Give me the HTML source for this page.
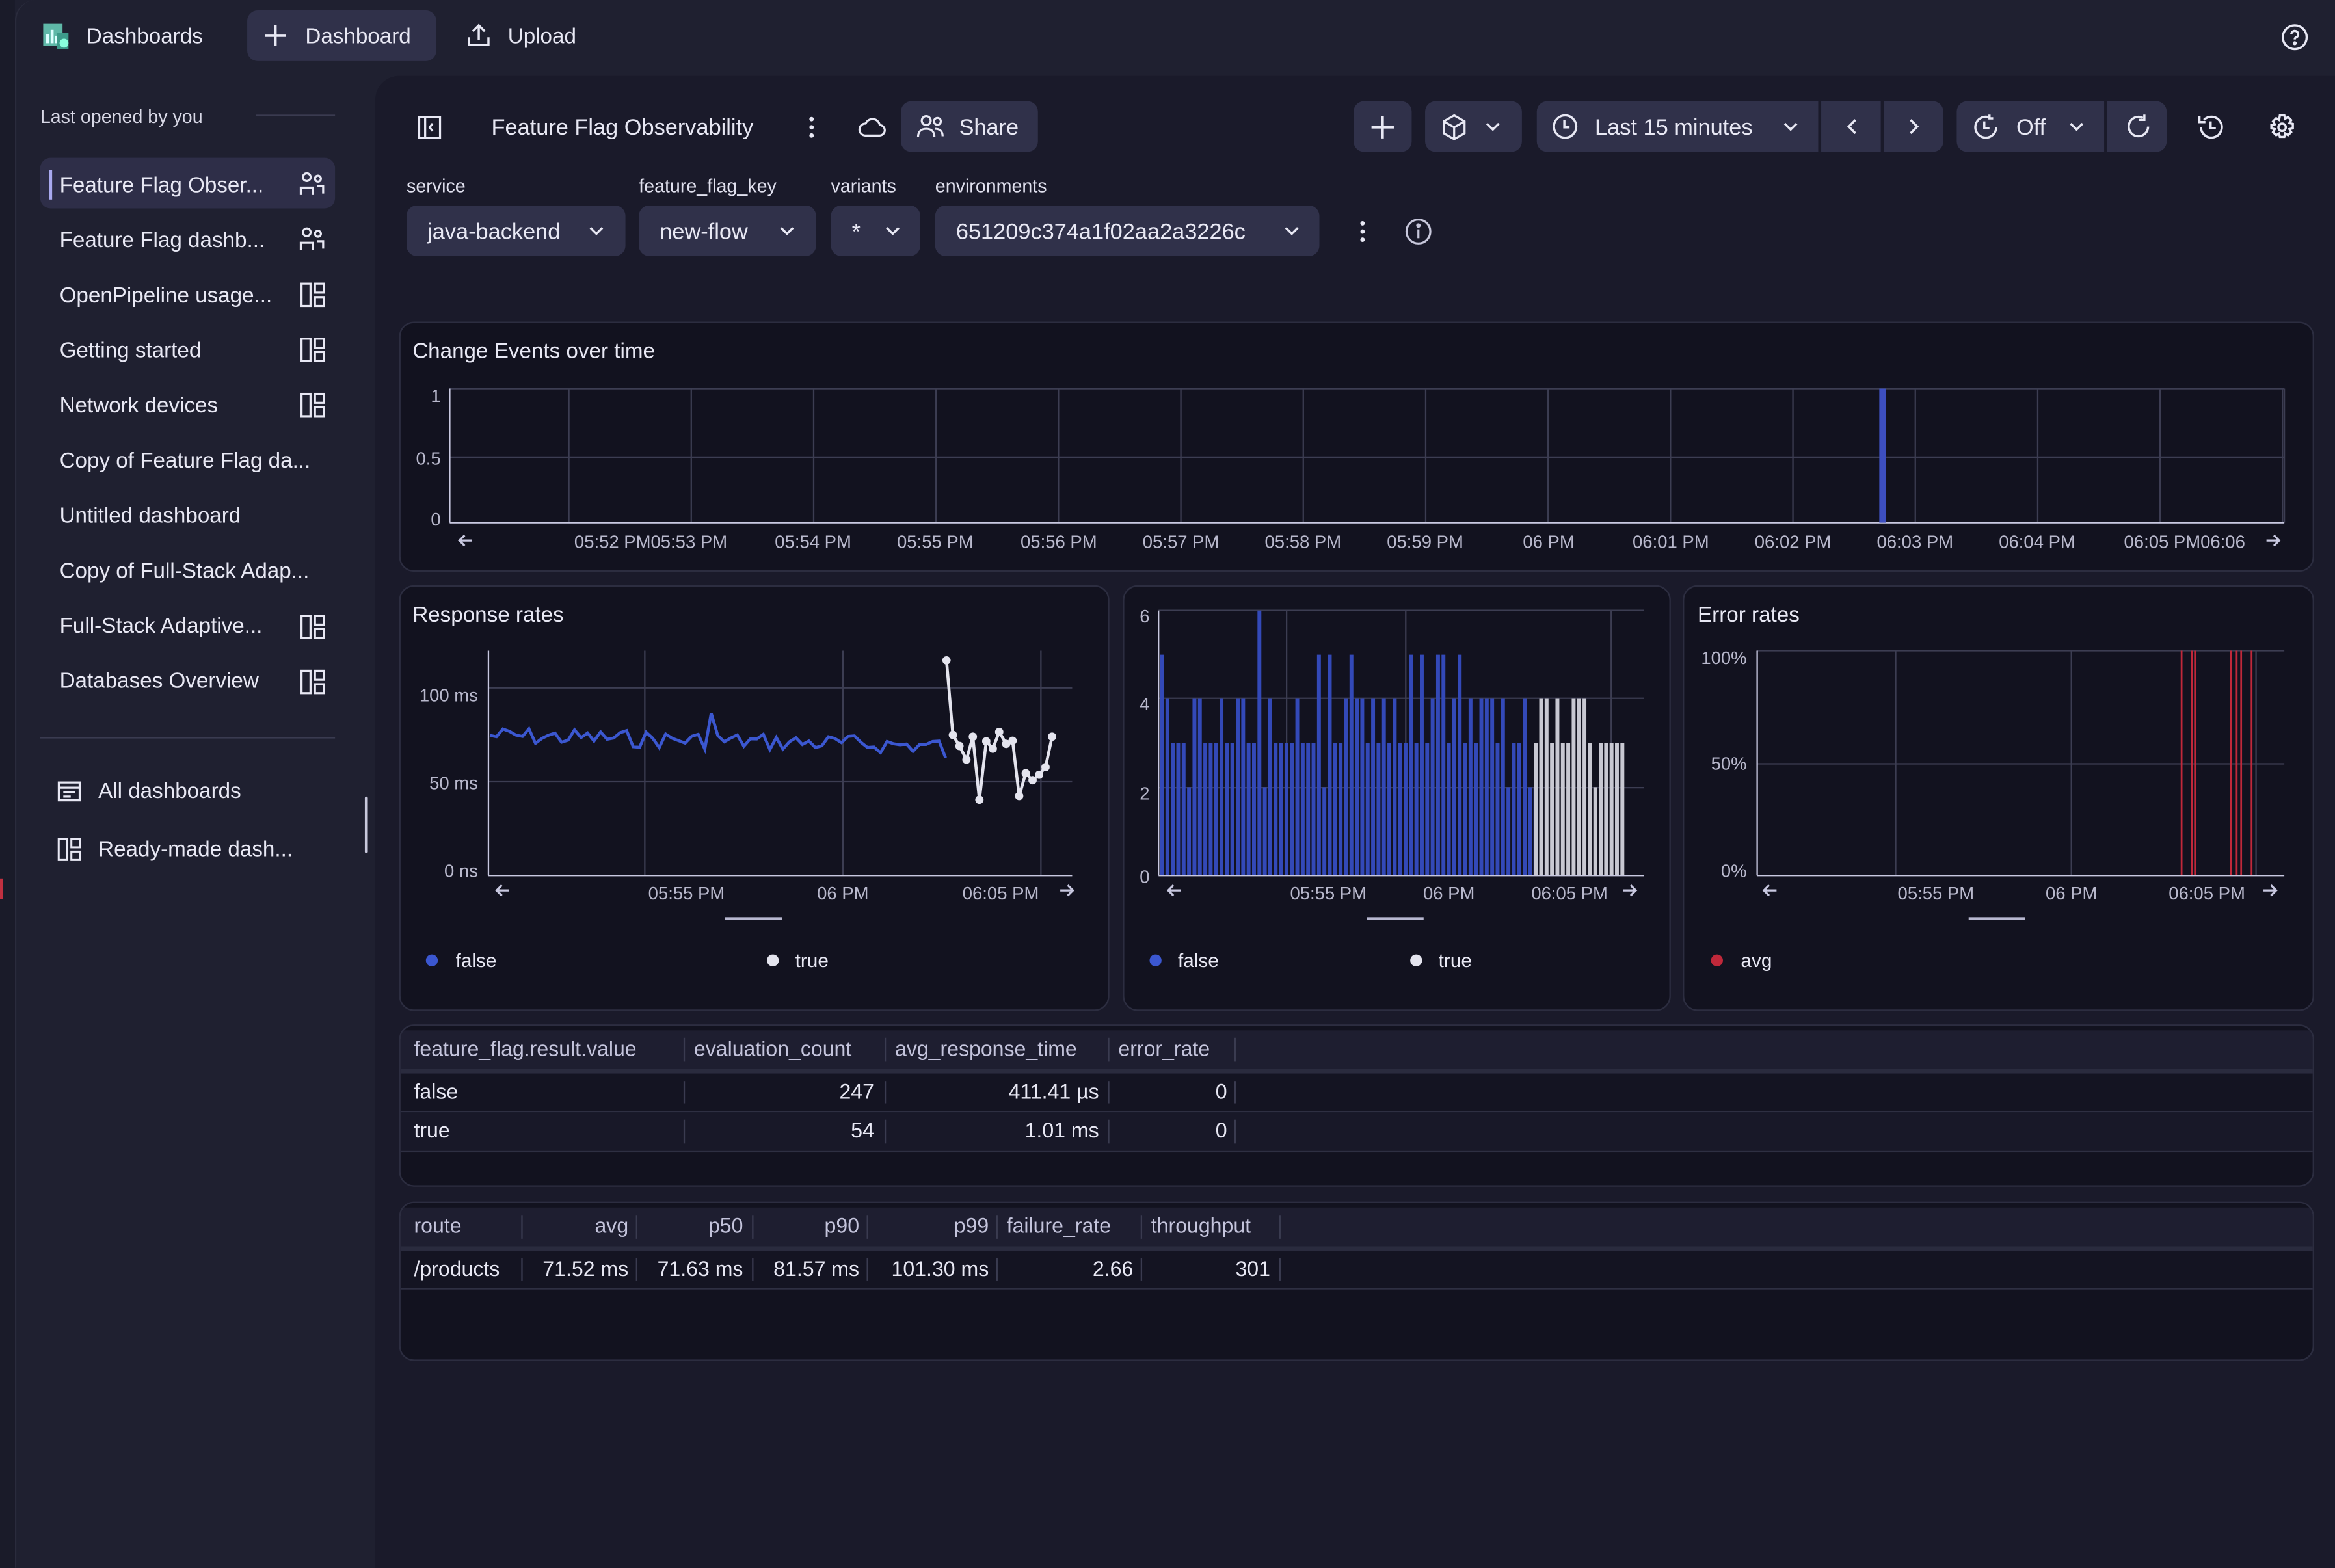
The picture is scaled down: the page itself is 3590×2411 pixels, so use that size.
<!DOCTYPE html>
<html><head><meta charset="utf-8">
<style>
html,body{margin:0;padding:0;width:3590px;height:2410px;overflow:hidden;background:#1f2030;}
#w{position:absolute;left:0;top:0;width:1568px;height:1053px;transform:scale(2.2895);transform-origin:0 0;font-family:"Liberation Sans",sans-serif;color:#e8e8f4;background:#1f2030;}
.a{position:absolute;white-space:nowrap;}
.t{font-size:14.5px;transform:translateY(2px);}
.m{transform:translateY(1.5px);}
.btn{position:absolute;background:#30314a;border-radius:7px;}
.tile{position:absolute;background:#12121f;border:1px solid #2c2d40;border-radius:10px;overflow:hidden;}
.lbl{font-size:12.5px;color:#e0e0ee;transform:translateY(1px);}
.ax{font-size:12px;fill:#b8b8cc;font-family:"Liberation Sans",sans-serif;}
svg{position:absolute;overflow:visible;}
.row{position:absolute;left:0;right:0;}
.cell{position:absolute;top:0;height:100%;font-size:14px;line-height:26px;transform:translateY(-1px);}
.sep{position:absolute;top:5px;bottom:5px;width:1px;background:#3a3b50;}
</style></head><body><div id="w">
<div class="a" style="left:0;top:0;width:10px;height:1053px;background:#1a1b29;"></div>
<div class="a" style="left:10px;top:0;width:1558px;height:1053px;background:#1f2030;border-top-left-radius:14px;border-left:1px solid #2a2b3c;"></div>
<svg style="left:28px;top:14px" width="20" height="20" viewBox="0 0 20 20"><rect x="1" y="2" width="13" height="15" fill="#5fb8a8"/><rect x="3" y="9" width="2" height="6" fill="#dff"/><rect x="6" y="6" width="2" height="9" fill="#dff"/><rect x="9" y="10" width="2" height="5" fill="#dff"/><rect x="10" y="8" width="8" height="11" fill="#3d9a8a"/><circle cx="15" cy="15" r="3" fill="#8fd"/></svg>
<div class="a t" style="left:58px;top:15px">Dashboards</div>
<div class="btn" style="left:166px;top:7px;width:127px;height:34px;"></div>
<svg style="left:177px;top:16px" width="16" height="16" viewBox="0 0 16 16"><path d="M8 1v14M1 8h14" stroke="#e8e8f4" stroke-width="1.6"/></svg>
<div class="a t" style="left:205px;top:15px">Dashboard</div>
<svg style="left:313px;top:15px" width="17" height="17" viewBox="0 0 17 17" fill="none" stroke="#e8e8f4" stroke-width="1.5"><path d="M8.5 12V2M4.5 6l4-4 4 4M2 10v5h13v-5"/></svg>
<div class="a t" style="left:341px;top:15px">Upload</div>
<svg style="left:1532px;top:16px" width="18" height="18" viewBox="0 0 18 18" fill="none" stroke="#e8e8f4" stroke-width="1.5"><circle cx="9" cy="9" r="8"/><path d="M6.7 7a2.3 2.3 0 1 1 3 2.2c-.6.3-.7.7-.7 1.3"/><circle cx="9" cy="13" r=".6" fill="#e8e8f4"/></svg>

<div class="a m" style="left:27px;top:70px;font-size:12.5px;color:#d8d8e6">Last opened by you</div>
<div class="a" style="left:172px;top:77px;width:53px;height:1px;background:#3a3b50"></div>
<div class="btn" style="left:27px;top:106px;width:198px;height:34px;background:#2e2e48"></div>
<div class="a" style="left:33px;top:114px;width:2px;height:20px;background:#a9a9f0"></div>
<div class="a t" style="left:40px;top:115px">Feature Flag Obser...</div>
<div class="a t" style="left:40px;top:152px">Feature Flag dashb...</div>
<div class="a t" style="left:40px;top:189px">OpenPipeline usage...</div>
<div class="a t" style="left:40px;top:226px">Getting started</div>
<div class="a t" style="left:40px;top:263px">Network devices</div>
<div class="a t" style="left:40px;top:300px">Copy of Feature Flag da...</div>
<div class="a t" style="left:40px;top:337px">Untitled dashboard</div>
<div class="a t" style="left:40px;top:374px">Copy of Full-Stack Adap...</div>
<div class="a t" style="left:40px;top:411px">Full-Stack Adaptive...</div>
<div class="a t" style="left:40px;top:448px">Databases Overview</div>
<svg style="left:200px;top:114px" width="19" height="19" viewBox="0 0 19 19" fill="none" stroke="#e8e8f4" stroke-width="1.4"><circle cx="6" cy="5" r="2.6"/><circle cx="13.5" cy="6" r="2"/><path d="M2 17v-5h8v5M13 11h4v5"/></svg>
<svg style="left:200px;top:151px" width="19" height="19" viewBox="0 0 19 19" fill="none" stroke="#e8e8f4" stroke-width="1.4"><circle cx="6" cy="5" r="2.6"/><circle cx="13.5" cy="6" r="2"/><path d="M2 17v-5h8v5M13 11h4v5"/></svg>
<svg style="left:201px;top:189px" width="18" height="18" viewBox="0 0 18 18" fill="none" stroke="#e8e8f4" stroke-width="1.4"><rect x="1.5" y="1.5" width="6" height="15"/><rect x="10.5" y="1.5" width="6" height="6"/><rect x="10.5" y="10.5" width="6" height="6"/></svg>
<svg style="left:201px;top:226px" width="18" height="18" viewBox="0 0 18 18" fill="none" stroke="#e8e8f4" stroke-width="1.4"><rect x="1.5" y="1.5" width="6" height="15"/><rect x="10.5" y="1.5" width="6" height="6"/><rect x="10.5" y="10.5" width="6" height="6"/></svg>
<svg style="left:201px;top:263px" width="18" height="18" viewBox="0 0 18 18" fill="none" stroke="#e8e8f4" stroke-width="1.4"><rect x="1.5" y="1.5" width="6" height="15"/><rect x="10.5" y="1.5" width="6" height="6"/><rect x="10.5" y="10.5" width="6" height="6"/></svg>
<svg style="left:201px;top:412px" width="18" height="18" viewBox="0 0 18 18" fill="none" stroke="#e8e8f4" stroke-width="1.4"><rect x="1.5" y="1.5" width="6" height="15"/><rect x="10.5" y="1.5" width="6" height="6"/><rect x="10.5" y="10.5" width="6" height="6"/></svg>
<svg style="left:201px;top:449px" width="18" height="18" viewBox="0 0 18 18" fill="none" stroke="#e8e8f4" stroke-width="1.4"><rect x="1.5" y="1.5" width="6" height="15"/><rect x="10.5" y="1.5" width="6" height="6"/><rect x="10.5" y="10.5" width="6" height="6"/></svg>
<div class="a" style="left:27px;top:495px;width:198px;height:1px;background:#3a3b50"></div>
<svg style="left:38px;top:523px" width="17" height="17" viewBox="0 0 17 17" fill="none" stroke="#e8e8f4" stroke-width="1.4"><rect x="1.5" y="2.5" width="14" height="12"/><path d="M1.5 6h14M4.5 9h8M4.5 12h5"/></svg>
<div class="a t" style="left:66px;top:522px">All dashboards</div>
<svg style="left:38px;top:562px" width="17" height="17" viewBox="0 0 18 18" fill="none" stroke="#e8e8f4" stroke-width="1.4"><rect x="1.5" y="1.5" width="6" height="15"/><rect x="10.5" y="1.5" width="6" height="6"/><rect x="10.5" y="10.5" width="6" height="6"/></svg>
<div class="a t" style="left:66px;top:561px">Ready-made dash...</div>
<div class="a" style="left:245px;top:535px;width:2px;height:38px;background:#c8c8dc;border-radius:1px"></div>
<div class="a" style="left:0px;top:590px;width:2px;height:14px;background:#c03040"></div>

<div class="a" style="left:252px;top:51px;width:1316px;height:1002px;background:#1a1a2a;border-top-left-radius:16px;"></div>
<svg style="left:280px;top:77px" width="17" height="17" viewBox="0 0 17 17" fill="none" stroke="#e8e8f4" stroke-width="1.4"><rect x="1.5" y="1.5" width="14" height="14"/><path d="M5.5 1.5v14M10.5 6l-2 2.5 2 2.5"/></svg>
<div class="a m" style="left:330px;top:76px;font-size:15px">Feature Flag Observability</div>
<svg style="left:538px;top:77px" width="14" height="17" viewBox="0 0 14 17"><circle cx="7" cy="3" r="1.5" fill="#e8e8f4"/><circle cx="7" cy="8.5" r="1.5" fill="#e8e8f4"/><circle cx="7" cy="14" r="1.5" fill="#e8e8f4"/></svg>
<svg style="left:576px;top:78px" width="19" height="15" viewBox="0 0 19 15" fill="none" stroke="#e8e8f4" stroke-width="1.4"><path d="M5 13h9.5a3.5 3.5 0 0 0 .3-7A5 5 0 0 0 5.3 5 4 4 0 0 0 5 13z"/></svg>
<div class="btn" style="left:605px;top:68px;width:92px;height:34px"></div>
<svg style="left:615px;top:76px" width="20" height="18" viewBox="0 0 20 18" fill="none" stroke="#e8e8f4" stroke-width="1.4"><circle cx="7" cy="5" r="3"/><circle cx="14.5" cy="5.5" r="2.3"/><path d="M1.5 16c0-4 2.5-5.5 5.5-5.5s5.5 1.5 5.5 5.5M13 10.5c3 0 5 1.5 5 5"/></svg>
<div class="a m" style="left:644px;top:76px;font-size:15px">Share</div>

<div class="btn" style="left:909px;top:68px;width:39px;height:34px"></div>
<svg style="left:920px;top:77px" width="17" height="17" viewBox="0 0 17 17"><path d="M8.5 1v15M1 8.5h15" stroke="#e8e8f4" stroke-width="1.6"/></svg>
<div class="btn" style="left:957px;top:68px;width:65px;height:34px"></div>
<svg style="left:967px;top:76px" width="19" height="19" viewBox="0 0 19 19" fill="none" stroke="#e8e8f4" stroke-width="1.4"><path d="M9.5 1.5l7 4v8l-7 4-7-4v-8zM2.5 5.5l7 4 7-4M9.5 9.5v8"/></svg>
<svg style="left:997px;top:81px" width="11" height="8" viewBox="0 0 11 8" fill="none" stroke="#e8e8f4" stroke-width="1.5"><path d="M1.5 2l4 4 4-4"/></svg>
<div class="btn" style="left:1032px;top:68px;width:189px;height:34px;border-radius:7px 0 0 7px"></div>
<svg style="left:1042px;top:76px" width="18" height="18" viewBox="0 0 18 18" fill="none" stroke="#e8e8f4" stroke-width="1.5"><circle cx="9" cy="9" r="7.5"/><path d="M8.5 4.5v5h3.5"/></svg>
<div class="a m" style="left:1071px;top:76px;font-size:15px">Last 15 minutes</div>
<svg style="left:1197px;top:81px" width="11" height="8" viewBox="0 0 11 8" fill="none" stroke="#e8e8f4" stroke-width="1.5"><path d="M1.5 2l4 4 4-4"/></svg>
<div class="btn" style="left:1223px;top:68px;width:40px;height:34px;border-radius:0"></div>
<svg style="left:1239px;top:79px" width="9" height="12" viewBox="0 0 9 12" fill="none" stroke="#e8e8f4" stroke-width="1.5"><path d="M7 1.5L2.5 6 7 10.5"/></svg>
<div class="btn" style="left:1265px;top:68px;width:40px;height:34px;border-radius:0 7px 7px 0"></div>
<svg style="left:1281px;top:79px" width="9" height="12" viewBox="0 0 9 12" fill="none" stroke="#e8e8f4" stroke-width="1.5"><path d="M2 1.5L6.5 6 2 10.5"/></svg>
<div class="btn" style="left:1314px;top:68px;width:99px;height:34px;border-radius:7px 0 0 7px"></div>
<svg style="left:1324px;top:76px" width="19" height="19" viewBox="0 0 19 19" fill="none" stroke="#e8e8f4" stroke-width="1.5"><path d="M16.5 9.5A7 7 0 1 1 12 2.9M12 1v2.5h2.5"/><path d="M8.5 5.5v4.5H12"/></svg>
<div class="a m" style="left:1354px;top:76px;font-size:15px">Off</div>
<svg style="left:1389px;top:81px" width="11" height="8" viewBox="0 0 11 8" fill="none" stroke="#e8e8f4" stroke-width="1.5"><path d="M1.5 2l4 4 4-4"/></svg>
<div class="btn" style="left:1415px;top:68px;width:40px;height:34px;border-radius:0 7px 7px 0"></div>
<svg style="left:1427px;top:76px" width="18" height="18" viewBox="0 0 18 18" fill="none" stroke="#e8e8f4" stroke-width="1.5"><path d="M15.5 9A6.5 6.5 0 1 1 12 3.2M13 1v3.5H9.5"/></svg>
<svg style="left:1475px;top:76px" width="19" height="19" viewBox="0 0 19 19" fill="none" stroke="#e8e8f4" stroke-width="1.5"><path d="M3 9.5a7 7 0 1 0 2-5M2 2v4h4"/><path d="M9.5 5.5v4.5H13"/></svg>
<svg style="left:1523px;top:76px" width="19" height="19" viewBox="0 0 19 19" fill="none" stroke="#e8e8f4" stroke-width="1.5"><circle cx="9.5" cy="9.5" r="2.5"/><path d="M8 1.5h3l.5 2.3 2-1.2 2.1 2.1-1.2 2 2.3.5v3l-2.3.5 1.2 2-2.1 2.1-2-1.2-.5 2.3H8l-.5-2.3-2 1.2-2.1-2.1 1.2-2-2.3-.5V8l2.3-.5-1.2-2 2.1-2.1 2 1.2z"/></svg>

<div class="a lbl" style="left:273px;top:117px">service</div>
<div class="a lbl" style="left:429px;top:117px">feature_flag_key</div>
<div class="a lbl" style="left:558px;top:117px">variants</div>
<div class="a lbl" style="left:628px;top:117px">environments</div>
<div class="btn" style="left:273px;top:138px;width:147px;height:34px"></div>
<div class="a m" style="left:287px;top:146px;font-size:15px">java-backend</div>
<div class="btn" style="left:429px;top:138px;width:119px;height:34px"></div>
<div class="a m" style="left:443px;top:146px;font-size:15px">new-flow</div>
<div class="btn" style="left:558px;top:138px;width:60px;height:34px"></div>
<div class="a m" style="left:572px;top:146px;font-size:15px">*</div>
<div class="btn" style="left:628px;top:138px;width:258px;height:34px"></div>
<div class="a m" style="left:642px;top:146px;font-size:15px">651209c374a1f02aa2a3226c</div>
<svg style="left:395px;top:151px" width="11" height="8" viewBox="0 0 11 8" fill="none" stroke="#e8e8f4" stroke-width="1.5"><path d="M1.5 2l4 4 4-4"/></svg>
<svg style="left:523px;top:151px" width="11" height="8" viewBox="0 0 11 8" fill="none" stroke="#e8e8f4" stroke-width="1.5"><path d="M1.5 2l4 4 4-4"/></svg>
<svg style="left:594px;top:151px" width="11" height="8" viewBox="0 0 11 8" fill="none" stroke="#e8e8f4" stroke-width="1.5"><path d="M1.5 2l4 4 4-4"/></svg>
<svg style="left:862px;top:151px" width="11" height="8" viewBox="0 0 11 8" fill="none" stroke="#e8e8f4" stroke-width="1.5"><path d="M1.5 2l4 4 4-4"/></svg>
<svg style="left:908px;top:147px" width="14" height="17" viewBox="0 0 14 17"><circle cx="7" cy="3" r="1.5" fill="#e8e8f4"/><circle cx="7" cy="8.5" r="1.5" fill="#e8e8f4"/><circle cx="7" cy="14" r="1.5" fill="#e8e8f4"/></svg>
<svg style="left:943px;top:146px" width="19" height="19" viewBox="0 0 19 19" fill="none" stroke="#c8c8dc" stroke-width="1.4"><circle cx="9.5" cy="9.5" r="8"/><path d="M9.5 8v6"/><circle cx="9.5" cy="5.5" r=".8" fill="#c8c8dc"/></svg>

<div class="tile" style="left:268px;top:216px;width:1284px;height:166px"></div>
<div class="a m" style="left:277px;top:227px;font-size:14.5px">Change Events over time</div>
<svg style="left:0;top:0" width="1568" height="1053" id="s1"></svg>

<div class="tile" style="left:268px;top:393px;width:475px;height:284px"></div>
<div class="tile" style="left:754px;top:393px;width:366px;height:284px"></div>
<div class="tile" style="left:1130px;top:393px;width:422px;height:284px"></div>
<div class="a m" style="left:277px;top:404px;font-size:14.5px">Response rates</div>
<div class="a m" style="left:1140px;top:404px;font-size:14.5px">Error rates</div>
<svg style="left:0;top:0" width="1568" height="1053" id="s2"></svg>
<div class="a m" style="left:306px;top:636px;font-size:13px">false</div>
<div class="a m" style="left:534px;top:636px;font-size:13px">true</div>
<div class="a m" style="left:791px;top:636px;font-size:13px">false</div>
<div class="a m" style="left:966px;top:636px;font-size:13px">true</div>
<div class="a m" style="left:1169px;top:636px;font-size:13px">avg</div>

<div class="tile" style="left:268px;top:688px;width:1284px;height:107px">
 <div class="row" style="top:3px;height:26px;background:#1e1e30;color:#c4c4dc">
  <div class="cell" style="left:9px">feature_flag.result.value</div><div class="sep" style="left:190px"></div>
  <div class="cell" style="left:197px">evaluation_count</div><div class="sep" style="left:325px"></div>
  <div class="cell" style="left:332px">avg_response_time</div><div class="sep" style="left:475px"></div>
  <div class="cell" style="left:482px">error_rate</div><div class="sep" style="left:560px"></div>
 </div>
 <div class="row" style="top:29px;height:3px;background:#2a2b3e"></div>
 <div class="row" style="top:32px;height:25px;background:#141422">
  <div class="cell" style="left:9px">false</div><div class="sep" style="left:190px"></div>
  <div class="cell" style="right:966px">247</div><div class="sep" style="left:325px"></div>
  <div class="cell" style="right:815px">411.41 µs</div><div class="sep" style="left:475px"></div>
  <div class="cell" style="right:729px">0</div><div class="sep" style="left:560px"></div>
 </div>
 <div class="row" style="top:57px;height:1px;background:#2e2f42"></div>
 <div class="row" style="top:58px;height:26px;background:#181828">
  <div class="cell" style="left:9px">true</div><div class="sep" style="left:190px"></div>
  <div class="cell" style="right:966px">54</div><div class="sep" style="left:325px"></div>
  <div class="cell" style="right:815px">1.01 ms</div><div class="sep" style="left:475px"></div>
  <div class="cell" style="right:729px">0</div><div class="sep" style="left:560px"></div>
 </div>
 <div class="row" style="top:84px;height:1px;background:#2e2f42"></div>
</div>

<div class="tile" style="left:268px;top:807px;width:1284px;height:105px">
 <div class="row" style="top:3px;height:26px;background:#1e1e30;color:#c4c4dc">
  <div class="cell" style="left:9px">route</div><div class="sep" style="left:81px"></div>
  <div class="cell" style="right:1131px">avg</div><div class="sep" style="left:158px"></div>
  <div class="cell" style="right:1054px">p50</div><div class="sep" style="left:236px"></div>
  <div class="cell" style="right:976px">p90</div><div class="sep" style="left:313px"></div>
  <div class="cell" style="right:889px">p99</div><div class="sep" style="left:400px"></div>
  <div class="cell" style="left:407px">failure_rate</div><div class="sep" style="left:497px"></div>
  <div class="cell" style="left:504px">throughput</div><div class="sep" style="left:590px"></div>
 </div>
 <div class="row" style="top:29px;height:3px;background:#2a2b3e"></div>
 <div class="row" style="top:32px;height:25px;background:#141422">
  <div class="cell" style="left:9px">/products</div><div class="sep" style="left:81px"></div>
  <div class="cell" style="right:1131px">71.52 ms</div><div class="sep" style="left:158px"></div>
  <div class="cell" style="right:1054px">71.63 ms</div><div class="sep" style="left:236px"></div>
  <div class="cell" style="right:976px">81.57 ms</div><div class="sep" style="left:313px"></div>
  <div class="cell" style="right:889px">101.30 ms</div><div class="sep" style="left:400px"></div>
  <div class="cell" style="right:792px">2.66</div><div class="sep" style="left:497px"></div>
  <div class="cell" style="right:700px">301</div><div class="sep" style="left:590px"></div>
 </div>
 <div class="row" style="top:57px;height:1px;background:#2e2f42"></div>
</div>
</div>
<script>
var NS="http://www.w3.org/2000/svg";
function el(p,t,a,txt){var e=document.createElementNS(NS,t);for(var k in a)e.setAttribute(k,a[k]);if(txt!==undefined)e.textContent=txt;p.appendChild(e);return e;}
var G="#3c3d52",AX="#c8c8e0";
var s=document.getElementById('s1');
[261,307,351].forEach(function(y){el(s,'line',{x1:302,x2:1534,y1:y,y2:y,stroke:G});});
for(var x=382;x<1534;x+=82.2){el(s,'line',{x1:x,x2:x,y1:261,y2:351,stroke:G});}
el(s,'line',{x1:1534,x2:1534,y1:261,y2:351,stroke:G});
el(s,'line',{x1:302,x2:302,y1:261,y2:351,stroke:AX});
el(s,'line',{x1:302,x2:1534,y1:351,y2:351,stroke:AX});
el(s,'rect',{x:1262,y:261,width:4.5,height:90,fill:"#3d4fc0"});
el(s,'text',{x:296,y:270,'text-anchor':'end',class:'ax'},'1');
el(s,'text',{x:296,y:312,'text-anchor':'end',class:'ax'},'0.5');
el(s,'text',{x:296,y:353,'text-anchor':'end',class:'ax'},'0');
var labs=[[437,'05:52 PM05:53 PM'],[546,'05:54 PM'],[628,'05:55 PM'],[711,'05:56 PM'],[793,'05:57 PM'],[875,'05:58 PM'],[957,'05:59 PM'],[1040,'06 PM'],[1122,'06:01 PM'],[1204,'06:02 PM'],[1286,'06:03 PM'],[1368,'06:04 PM'],[1467,'06:05 PM06:06 ']];
labs.forEach(function(l){el(s,'text',{x:l[0],y:368,'text-anchor':'middle',class:'ax'},l[1]);});
function arr(p,x,y,d){el(p,'path',{d:d<0?'M'+(x+4)+' '+y+'h-8m3-3.5l-3.5 3.5 3.5 3.5':'M'+(x-4)+' '+y+'h8m-3-3.5l3.5 3.5-3.5 3.5',stroke:AX,'stroke-width':1.4,fill:'none'});}
arr(s,313,363,-1);arr(s,1526,363,1);
var t=document.getElementById('s2');
[462,525].forEach(function(y){el(t,'line',{x1:328,x2:720,y1:y,y2:y,stroke:G});});
[433,566,699].forEach(function(x){el(t,'line',{x1:x,x2:x,y1:437,y2:588,stroke:G});});
el(t,'line',{x1:328,x2:328,y1:437,y2:588,stroke:AX});el(t,'line',{x1:328,x2:720,y1:588,y2:588,stroke:AX});
el(t,'text',{x:321,y:471,'text-anchor':'end',class:'ax'},'100 ms');
el(t,'text',{x:321,y:530,'text-anchor':'end',class:'ax'},'50 ms');
el(t,'text',{x:321,y:589,'text-anchor':'end',class:'ax'},'0 ns');
[[461,'05:55 PM'],[566,'06 PM'],[672,'06:05 PM']].forEach(function(l){el(t,'text',{x:l[0],y:604,'text-anchor':'middle',class:'ax'},l[1]);});
arr(t,338,598,-1);arr(t,716,598,1);
el(t,'rect',{x:487,y:616,width:38,height:2,fill:'#b8b8d0'});
var seed=7;function r(){seed=(seed*9301+49297)%233280;return seed/233280;}
var pts=[];for(var i=0;i<=70;i++){var x=329+i*(306/70);var y=494+i*0.1+(r()-0.5)*12;if(i==34)y=479;if(i==35)y=494;pts.push(x.toFixed(1)+','+y.toFixed(1));}
pts[70]='635,509';
el(t,'polyline',{points:pts.join(' '),fill:'none',stroke:'#3b57d0','stroke-width':2});
var W=[[635.6,443.5],[639.9,493.6],[644.3,501],[649,510.2],[653.3,494.8],[657.7,537.1],[662.3,497.9],[666.7,502.8],[671,491.6],[675.7,499.6],[680,497.5],[684.4,534.6],[688.8,519.3],[693.4,524],[697.8,520.3],[702.1,515.2],[706.5,494.8]];
el(t,'polyline',{points:W.map(function(p){return p.join(',')}).join(' '),fill:'none',stroke:'#e4e4ee','stroke-width':2});
W.forEach(function(p){el(t,'circle',{cx:p[0],cy:p[1],r:2.8,fill:'#e4e4ee'});});
el(t,'circle',{cx:290,cy:645,r:4,fill:'#3b57d0'});el(t,'circle',{cx:519,cy:645,r:4,fill:'#e4e4ee'});
[410,469,529].forEach(function(y){el(t,'line',{x1:778,x2:1104,y1:y,y2:y,stroke:G});});
[864,944,1082].forEach(function(x){el(t,'line',{x1:x,x2:x,y1:410,y2:588,stroke:G});});
var hb=[5,4,3,3,3,2,4,4,3,3,3,4,3,3,4,4,3,3,6,2,4,3,3,3,3,4,3,3,3,5,2,5,3,3,4,5,4,4,3,4,3,4,3,4,3,3,5,3,5,3,4,5,5,3,4,5,3,4,3,4,4,4,3,4,2,3,3,4,2,2];
var hw=[3,4,4,3,4,3,3,4,4,4,3,2,3,3,3,3,3];
var u=(588-410)/6;
hb.forEach(function(h,i){var x=779+i*3.635;el(t,'rect',{x:x,y:588-h*u,width:2.6,height:h*u,fill:'#3349b8'});});
hw.forEach(function(h,i){var x=1030+i*3.635;el(t,'rect',{x:x,y:588-h*u,width:2.6,height:h*u,fill:'#c8c8d2'});});
el(t,'line',{x1:778,x2:778,y1:410,y2:588,stroke:AX});el(t,'line',{x1:778,x2:1104,y1:588,y2:588,stroke:AX});
[[414,'6'],[473,'4'],[533,'2'],[589,'0']].forEach(function(l){el(t,'text',{x:772,y:l[0]+4,'text-anchor':'end',class:'ax'},l[1]);});
[[892,'05:55 PM'],[973,'06 PM'],[1054,'06:05 PM']].forEach(function(l){el(t,'text',{x:l[0],y:604,'text-anchor':'middle',class:'ax'},l[1]);});
arr(t,789,598,-1);arr(t,1094,598,1);
el(t,'rect',{x:918,y:616,width:38,height:2,fill:'#b8b8d0'});
el(t,'circle',{cx:776,cy:645,r:4,fill:'#3b57d0'});el(t,'circle',{cx:951,cy:645,r:4,fill:'#e4e4ee'});
[437,513].forEach(function(y){el(t,'line',{x1:1180,x2:1534,y1:y,y2:y,stroke:G});});
[1273,1391,1515].forEach(function(x){el(t,'line',{x1:x,x2:x,y1:437,y2:588,stroke:G});});
[1465,1472,1474,1498,1502,1505,1512].forEach(function(x){el(t,'line',{x1:x,x2:x,y1:437,y2:588,stroke:'#c0283a','stroke-width':1.2});});
el(t,'line',{x1:1180,x2:1180,y1:437,y2:588,stroke:AX});el(t,'line',{x1:1180,x2:1534,y1:588,y2:588,stroke:AX});
[[446,'100%'],[517,'50%'],[589,'0%']].forEach(function(l){el(t,'text',{x:1173,y:l[0],'text-anchor':'end',class:'ax'},l[1]);});
[[1300,'05:55 PM'],[1391,'06 PM'],[1482,'06:05 PM']].forEach(function(l){el(t,'text',{x:l[0],y:604,'text-anchor':'middle',class:'ax'},l[1]);});
arr(t,1189,598,-1);arr(t,1524,598,1);
el(t,'rect',{x:1322,y:616,width:38,height:2,fill:'#b8b8d0'});
el(t,'circle',{cx:1153,cy:645,r:4,fill:'#c0283a'});
</script>
</body></html>
